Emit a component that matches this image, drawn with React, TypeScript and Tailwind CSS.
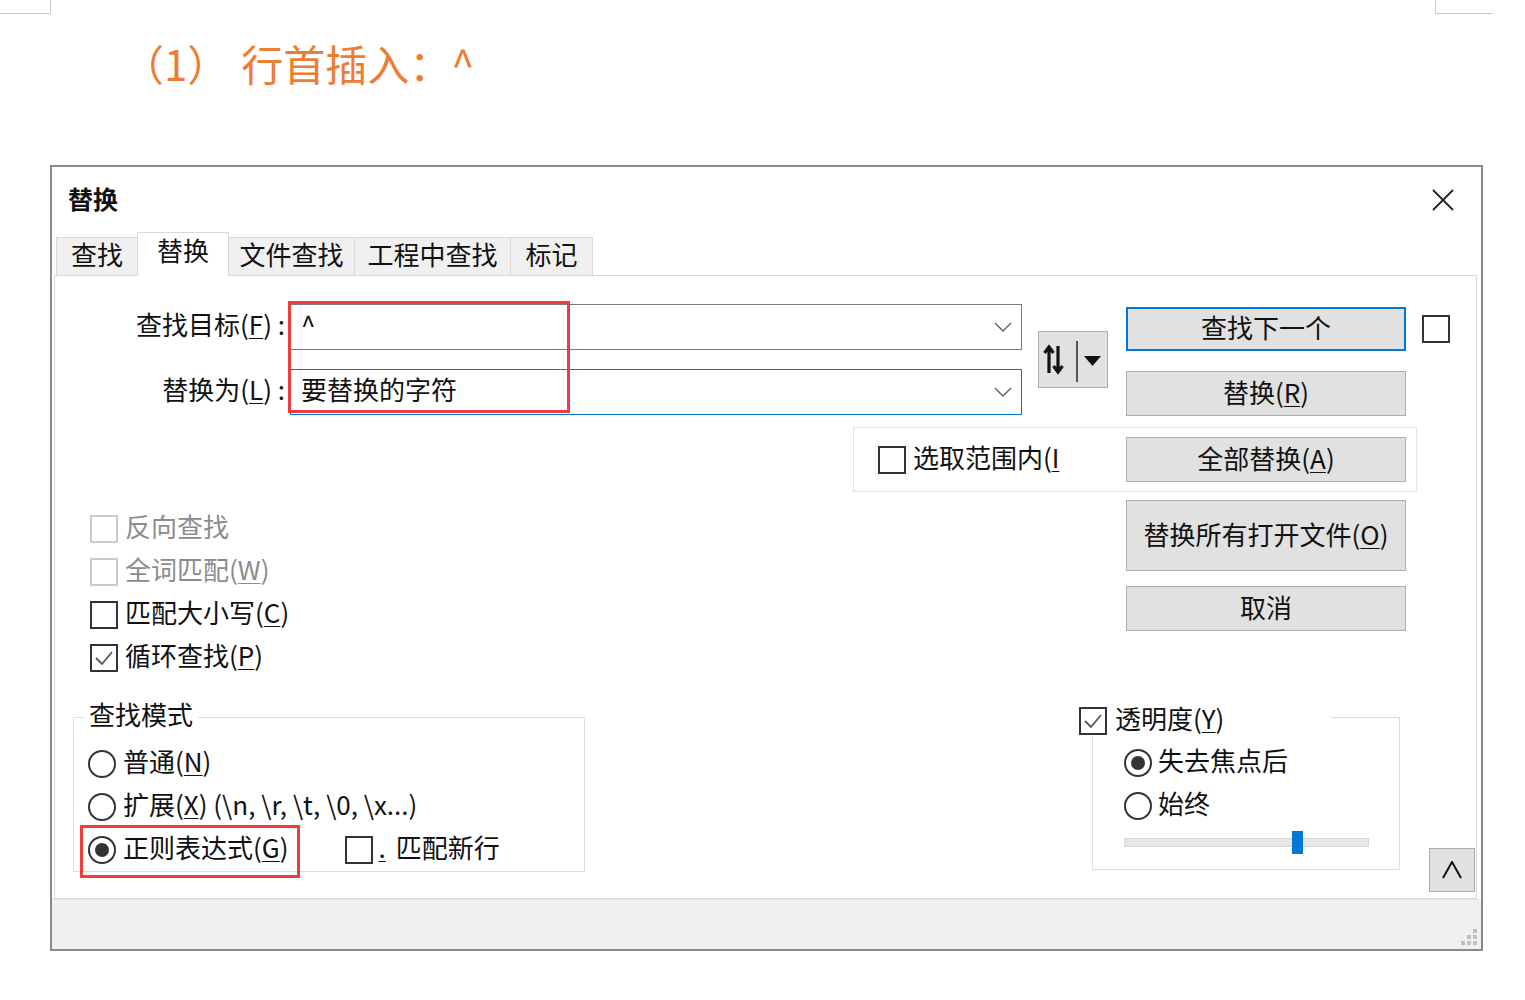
import type { ReactNode } from 'react'

// Notepad++ style "替换" dialog with an orange step heading above it

// Noto CJK sits a little lower than YaHei, so text is nudged up
const lift = 'relative -top-[3px]'

function U({ children }: { children: ReactNode }) {
    return <span className="underline decoration-1 underline-offset-[3px]">{children}</span>
}

function CheckBox({ checked, disabled }: { checked?: boolean; disabled?: boolean }) {
    return (
        <span
            className={`w-[28px] h-[28px] shrink-0 bg-white border-2 flex items-center justify-center ${
                disabled ? 'border-[#cccccc]' : 'border-[#333333]'
            }`}
        >
            {checked && (
                <svg width="22" height="22" viewBox="0 0 22 22">
                    <polyline points="3,11 9,17 19,5" fill="none" stroke="#555555" strokeWidth="1.8" />
                </svg>
            )}
        </span>
    )
}

function Radio({ checked }: { checked?: boolean }) {
    return (
        <span className="w-[28px] h-[28px] shrink-0 rounded-full bg-white border-2 border-[#333333] flex items-center justify-center">
            {checked && <span className="w-[14px] h-[14px] rounded-full bg-[#333333]" />}
        </span>
    )
}

function Btn({ children, className = '' }: { children: ReactNode; className?: string }) {
    return (
        <div className={`w-[280px] flex items-center justify-center bg-[#e1e1e1] text-[26px] leading-none ${className}`}>
            <span className="relative -top-[2px]">{children}</span>
        </div>
    )
}

function Chevron() {
    return (
        <svg width="18" height="10" viewBox="0 0 18 10">
            <polyline points="1,1 9,9 17,1" fill="none" stroke="#606060" strokeWidth="1.4" />
        </svg>
    )
}

const tabs = [
    { label: '查找', w: 'w-[82px]' },
    { label: '替换', w: 'w-[92px]', active: true },
    { label: '文件查找', w: 'w-[127px]' },
    { label: '工程中查找', w: 'w-[157px]' },
    { label: '标记', w: 'w-[83px]' },
]

export default function App() {
    return (
        <div className="w-[1525px] h-[1000px] bg-white relative overflow-hidden text-[#111111] font-['Noto_Sans_CJK_SC','Noto_Sans',sans-serif]">
            {/* crop marks */}
            <div className="absolute left-0 top-0 w-[51px] h-[14px] border-r border-b border-[#c8c8c8]" />
            <div className="absolute left-[1435px] top-0 w-[58px] h-[14px] border-l border-b border-[#c8c8c8]" />

            {/* heading */}
            <div className="pt-[39px] pl-[122px] text-[42px] leading-[48px] text-[#ed7d31]">
                （1）<span className="ml-[12px]">行首插入：^</span>
            </div>

            {/* dialog */}
            <div className="ml-[50px] mt-[78px] w-[1433px] h-[786px] border-2 border-[#8a8a8a] flex flex-col">
                {/* title bar */}
                <div className="h-[65px] shrink-0 flex items-center justify-between pl-[16px] pr-[27px]">
                    <span className="text-[25px] font-bold leading-none relative -top-[1px]">替换</span>
                    <svg width="22" height="22" viewBox="0 0 22 22">
                        <path d="M1 1 L21 21 M21 1 L1 21" stroke="#222222" strokeWidth="1.8" />
                    </svg>
                </div>

                {/* tabs */}
                <div className="h-[43px] shrink-0 flex items-end pl-[4px] relative z-10">
                    {tabs.map((t) =>
                        t.active ? (
                            <div
                                key={t.label}
                                className={`${t.w} h-[44px] -mb-px -mr-px bg-white border border-b-0 border-[#d9d9d9] flex justify-center text-[26px] leading-[34px]`}
                            >
                                {t.label}
                            </div>
                        ) : (
                            <div
                                key={t.label}
                                className={`${t.w} h-[38px] -mr-px bg-[#f0f0f0] border border-b-0 border-[#d9d9d9] flex items-center justify-center text-[26px] leading-none`}
                            >
                                <span className={lift}>{t.label}</span>
                            </div>
                        )
                    )}
                </div>

                {/* panel */}
                <div className="ml-[2px] w-[1423px] h-[624px] shrink-0 bg-white border border-[#d9d9d9] flex flex-col">
                    {/* find / replace rows */}
                    <div className="flex items-start pt-[28px]">
                        <div className="w-[235px] flex flex-col items-end pr-[5px] text-[26px] leading-none">
                            <div className="h-[46px] flex items-center">
                                <span className={lift}>
                                    查找目标(<U>F</U>) :
                                </span>
                            </div>
                            <div className="h-[46px] mt-[19px] flex items-center">
                                <span className={lift}>
                                    替换为(<U>L</U>) :
                                </span>
                            </div>
                        </div>

                        <div className="w-[732px] relative">
                            <div className="h-[46px] border border-[#7a7a7a] flex items-center justify-between pl-[10px] pr-[9px] text-[26px] leading-none">
                                <span className={lift}>^</span>
                                <Chevron />
                            </div>
                            <div className="h-[46px] mt-[19px] border border-[#0078d7] flex items-center justify-between pl-[10px] pr-[9px] text-[26px] leading-none">
                                <span className={lift}>要替换的字符</span>
                                <Chevron />
                            </div>
                            <div className="absolute -left-[2px] -top-[3px] w-[282px] h-[112px] border-[3px] border-[#f03c3c]" />
                        </div>

                        <div className="ml-[16px] mt-[27px] w-[70px] h-[57px] bg-[#e1e1e1] border border-[#adadad] flex items-center">
                            <svg width="68" height="55" viewBox="0 0 68 55">
                                <path d="M10 41 V16 M5.5 21 L10 15 L14.5 21" fill="none" stroke="#111111" strokeWidth="3.2" />
                                <path d="M19 14 V39 M14.5 34 L19 40 L23.5 34" fill="none" stroke="#111111" strokeWidth="3.2" />
                                <line x1="38" y1="9" x2="38" y2="50" stroke="#555555" strokeWidth="2" />
                                <polygon points="45,24 62,24 53.5,34" fill="#111111" />
                            </svg>
                        </div>

                        <div className="ml-[18px] mt-[3px] flex flex-col">
                            <Btn className="h-[44px] border-2 border-[#0078d7]">查找下一个</Btn>
                            <Btn className="h-[45px] mt-[20px] border border-[#adadad]">
                                替换(<U>R</U>)
                            </Btn>
                        </div>

                        <div className="ml-[16px] mt-[11px]">
                            <CheckBox />
                        </div>
                    </div>

                    {/* in selection */}
                    <div className="mt-[11px] ml-[798px] w-[564px] h-[65px] border border-[#e3e3e3] flex items-center pl-[24px]">
                        <CheckBox />
                        <span className={`ml-[7px] w-[154px] whitespace-nowrap text-[26px] leading-none ${lift}`}>
                            选取范围内(<U>I</U>
                        </span>
                        <Btn className="ml-[59px] h-[45px] border border-[#adadad]">
                            全部替换(<U>A</U>)
                        </Btn>
                    </div>

                    {/* options + buttons */}
                    <div className="flex items-start">
                        <div className="ml-[35px] pt-[15px] flex flex-col text-[26px] leading-none">
                            <div className="h-[43px] flex items-center gap-[7px] text-[#8c8c8c]">
                                <CheckBox disabled />
                                <span className={lift}>反向查找</span>
                            </div>
                            <div className="h-[43px] flex items-center gap-[7px] text-[#8c8c8c]">
                                <CheckBox disabled />
                                <span className={lift}>
                                    全词匹配(<U>W</U>)
                                </span>
                            </div>
                            <div className="h-[43px] flex items-center gap-[7px]">
                                <CheckBox />
                                <span className={lift}>
                                    匹配大小写(<U>C</U>)
                                </span>
                            </div>
                            <div className="h-[43px] flex items-center gap-[7px]">
                                <CheckBox checked />
                                <span className={lift}>
                                    循环查找(<U>P</U>)
                                </span>
                            </div>
                        </div>

                        <div className="ml-auto mr-[70px] pt-[8px] flex flex-col">
                            <Btn className="h-[71px] border border-[#adadad]">
                                替换所有打开文件(<U>O</U>)
                            </Btn>
                            <Btn className="h-[45px] mt-[15px] border border-[#adadad]">取消</Btn>
                        </div>
                    </div>

                    {/* groups */}
                    <div className="flex items-start mt-[38px]">
                        <div className="ml-[18px] w-[512px] h-[155px] border border-[#dcdcdc] relative">
                            <span className="absolute left-[10px] -top-[20px] bg-white px-[5px] text-[26px] leading-[32px]">
                                查找模式
                            </span>
                            <div className="pt-[24px] pl-[14px] flex flex-col text-[26px] leading-none">
                                <div className="h-[43px] flex items-center gap-[7px]">
                                    <Radio />
                                    <span className={lift}>
                                        普通(<U>N</U>)
                                    </span>
                                </div>
                                <div className="h-[43px] flex items-center gap-[7px]">
                                    <Radio />
                                    <span className={lift}>
                                        扩展(<U>X</U>) (\n, \r, \t, \0, \x...)
                                    </span>
                                </div>
                                <div className="h-[43px] flex items-center">
                                    <Radio checked />
                                    <span className={`ml-[7px] ${lift}`}>
                                        正则表达式(<U>G</U>)
                                    </span>
                                    <span className="ml-[56px]">
                                        <CheckBox />
                                    </span>
                                    <span className={`ml-[6px] ${lift}`}>
                                        <U>.</U>
                                        <span className="ml-[10px]">匹配新行</span>
                                    </span>
                                </div>
                            </div>
                            <div className="absolute left-[6px] top-[107px] w-[220px] h-[53px] border-[3px] border-[#f03c3c]" />
                        </div>

                        <div className="ml-[507px] w-[308px] h-[153px] border border-[#dcdcdc] relative">
                            <div className="absolute -left-[14px] -top-[12px] w-[252px] h-[30px] bg-white flex items-center gap-[8px] text-[26px] leading-none">
                                <CheckBox checked />
                                <span className={lift}>
                                    透明度(<U>Y</U>)
                                </span>
                            </div>
                            <div className="pt-[23px] pl-[31px] flex flex-col text-[26px] leading-none">
                                <div className="h-[43px] flex items-center gap-[6px]">
                                    <Radio checked />
                                    <span className={lift}>失去焦点后</span>
                                </div>
                                <div className="h-[43px] flex items-center gap-[6px]">
                                    <Radio />
                                    <span className={lift}>始终</span>
                                </div>
                                <div className="mt-[4px] h-[23px] w-[245px] relative flex items-center">
                                    <div className="w-[245px] h-[9px] bg-[#e7e7e7] border border-[#d6d6d6]" />
                                    <div className="absolute left-[168px] top-0 w-[11px] h-[23px] bg-[#0078d7]" />
                                </div>
                            </div>
                        </div>

                        <div className="ml-[29px] mt-[131px] w-[46px] h-[44px] bg-[#e1e1e1] border border-[#adadad] flex items-center justify-center">
                            <svg width="20" height="18" viewBox="0 0 20 18">
                                <polyline points="1,17 10,1 19,17" fill="none" stroke="#111111" strokeWidth="2" />
                            </svg>
                        </div>
                    </div>
                </div>

                {/* footer with size grip */}
                <div className="flex-1 bg-[#f0f0f0] border-t border-[#e3e3e3] flex items-end justify-end p-[2px]">
                    <svg width="20" height="20" viewBox="0 0 20 20">
                        <rect x="14" y="2" width="4" height="4" fill="#c0c0c0" />
                        <rect x="8" y="8" width="4" height="4" fill="#c0c0c0" />
                        <rect x="14" y="8" width="4" height="4" fill="#c0c0c0" />
                        <rect x="2" y="14" width="4" height="4" fill="#c0c0c0" />
                        <rect x="8" y="14" width="4" height="4" fill="#c0c0c0" />
                        <rect x="14" y="14" width="4" height="4" fill="#c0c0c0" />
                    </svg>
                </div>
            </div>
        </div>
    )
}
